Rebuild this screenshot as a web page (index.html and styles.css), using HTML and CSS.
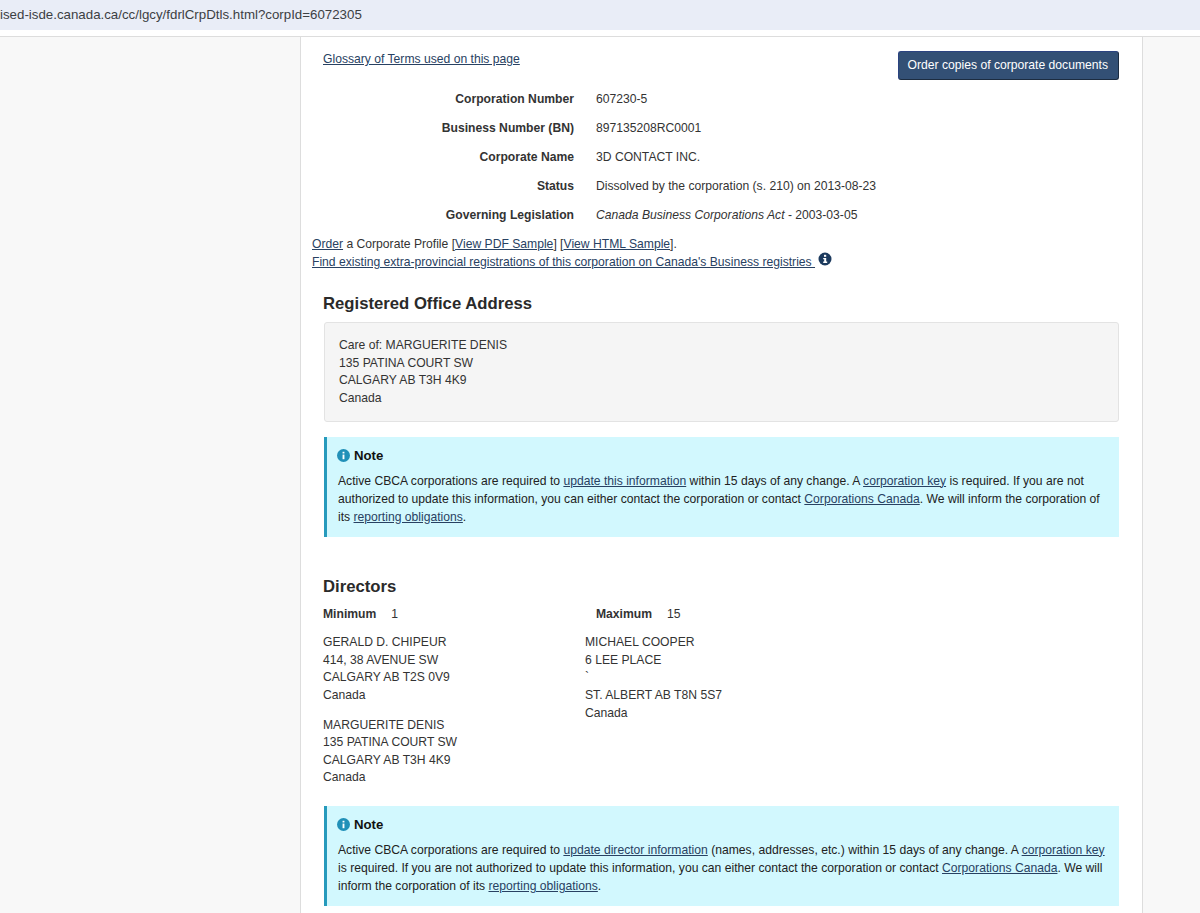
FILE: index.html
```html
<!DOCTYPE html>
<html lang="en">
  <head>
    <meta charset="UTF-8" />
    <title>Federal Corporation Information</title>
    <link rel="stylesheet" href="styles.css">
  </head>
  <body>
    <div class="top-strip">
      <div class="url-bar">ised-isde.canada.ca/cc/lgcy/fdrlCrpDtls.html?corpId=6072305</div>
    </div>

    <div class="page">
      <main class="content">
        <div class="top-row">
          <a href="#">Glossary of Terms used on this page</a>
          <a href="#" class="btn-order">Order copies of corporate documents</a>
        </div>

        <dl class="details">
          <div class="row"><dt>Corporation Number</dt><dd>607230-5</dd></div>
          <div class="row"><dt>Business Number (BN)</dt><dd>897135208RC0001</dd></div>
          <div class="row"><dt>Corporate Name</dt><dd>3D CONTACT INC.</dd></div>
          <div class="row"><dt>Status</dt><dd>Dissolved by the corporation (s. 210) on 2013-08-23</dd></div>
          <div class="row"><dt>Governing Legislation</dt><dd><em>Canada Business Corporations Act</em> - 2003-03-05</dd></div>
        </dl>

        <div class="links">
          <p><a href="#">Order</a> a Corporate Profile [<a href="#">View PDF Sample</a>] [<a href="#">View HTML Sample</a>].</p>
          <p>
            <a href="#">Find existing extra-provincial registrations of this corporation on Canada's Business registries </a>
            <svg class="info-dark" width="14" height="14" viewBox="0 0 14 14"><circle cx="7" cy="7" r="6.5" fill="#1c3a5e"/><rect x="6" y="2.8" width="2.2" height="2" fill="#fff"/><path d="M5.2 6h3v3.6h1v1.3H5.2V9.6h1V7.3H5.2z" fill="#fff"/></svg>
          </p>
        </div>

        <h2 class="office-title">Registered Office Address</h2>
        <div class="well">
          Care of: MARGUERITE DENIS<br>
          135 PATINA COURT SW<br>
          CALGARY AB T3H 4K9<br>
          Canada
        </div>

        <section class="note">
          <h3><svg width="13" height="13" viewBox="0 0 14 14"><circle cx="7" cy="7" r="7" fill="#2190b8"/><rect x="6" y="3" width="2" height="1.8" fill="#fff"/><rect x="6" y="6" width="2" height="5" fill="#fff"/></svg> Note</h3>
          <p>Active CBCA corporations are required to <a href="#">update this information</a> within 15 days of any change. A <a href="#">corporation key</a> is required. If you are not authorized to update this information, you can either contact the corporation or contact <a href="#">Corporations Canada</a>. We will inform the corporation of its <a href="#">reporting obligations</a>.</p>
        </section>

        <h2 class="directors-title">Directors</h2>
        <div class="limits">
          <div class="limit-min"><b>Minimum</b><span>1</span></div>
          <div class="limit-max"><b>Maximum</b><span>15</span></div>
        </div>
        <div class="directors">
          <div class="director-col">
            <p>GERALD D. CHIPEUR<br>414, 38 AVENUE SW<br>CALGARY AB T2S 0V9<br>Canada</p>
            <p>MARGUERITE DENIS<br>135 PATINA COURT SW<br>CALGARY AB T3H 4K9<br>Canada</p>
          </div>
          <div class="director-col">
            <p>MICHAEL COOPER<br>6 LEE PLACE<br>`<br>ST. ALBERT AB T8N 5S7<br>Canada</p>
          </div>
        </div>

        <section class="note">
          <h3><svg width="13" height="13" viewBox="0 0 14 14"><circle cx="7" cy="7" r="7" fill="#2190b8"/><rect x="6" y="3" width="2" height="1.8" fill="#fff"/><rect x="6" y="6" width="2" height="5" fill="#fff"/></svg> Note</h3>
          <p>Active CBCA corporations are required to <a href="#">update director information</a> (names, addresses, etc.) within 15 days of any change. A <a href="#">corporation key</a> is required. If you are not authorized to update this information, you can either contact the corporation or contact <a href="#">Corporations Canada</a>. We will inform the corporation of its <a href="#">reporting obligations</a>.</p>
        </section>
      </main>
    </div>
  </body>
</html>
```

FILE: styles.css
```css
html, body {
  height: 100%;
}

body {
  margin: 0;
  font-family: "Liberation Sans", Arial, sans-serif;
  font-size: 12.15px;
  line-height: 17.6px;
  color: #333;
  background-color: #f8f8f8;
  overflow: hidden;
}

a {
  color: #284162;
  text-decoration: underline;
}

p {
  margin: 0;
}

.top-strip {
  padding-bottom: 6px;
  background-color: #fff;
  border-bottom: 1px solid #ddd;
}

.url-bar {
  height: 30px;
  background-color: #e9edf7;
  font-size: 13.3px;
  line-height: 30px;
  color: #3c4043;
  white-space: nowrap;
}

.page {
  margin-left: 300px;
  width: 843px;
  min-height: 876px;
  box-sizing: border-box;
  background-color: #fff;
  border-left: 1px solid #ddd;
  border-right: 1px solid #ddd;
}

.content {
  padding: 13px 23px 0 11px;
}

.top-row {
  display: flex;
  justify-content: space-between;
  align-items: flex-start;
  margin-left: 11px;
  height: 33px;
}

.top-row > a:first-child {
  margin-top: 1px;
}

.btn-order {
  padding: 5px 10px 6px 9px;
  font-size: 12.15px;
  line-height: 16px;
  color: #fff;
  text-decoration: none;
  background-color: #335075;
  border: 1px solid #2b4380;
  border-right-color: #1c2c40;
  border-bottom-color: #1c2c40;
  border-radius: 3px;
  margin-top: 1px;
}

.details {
  margin: 8px 0 0;
}

.row {
  display: flex;
  height: 29px;
  align-items: flex-start;
}

.row dt {
  width: 262px;
  text-align: right;
  font-weight: bold;
}

.row dd {
  margin: 0 0 0 22px;
}

.info-dark {
  vertical-align: 0;
  margin-top: -4px;
  margin-left: 3px;
}

h2 {
  margin: 0;
  font-size: 16.7px;
  line-height: 20px;
  color: #2a2a2a;
}

.office-title {
  margin: 23px 0 0 11px;
}

.well {
  margin: 8px 0 0 12px;
  padding: 14px 14px 13px;
  background-color: #f5f5f5;
  border: 1px solid #e3e3e3;
  border-radius: 3px;
}

.note {
  margin: 15px 0 0 12px;
  padding: 10px 14px 11px 11px;
  background-color: #d2f8fe;
  border-left: 3px solid #269abc;
  color: #222;
}

.note h3 {
  margin: 0 0 7px;
  font-size: 13.2px;
  line-height: 18px;
  color: #111;
  display: flex;
  align-items: center;
  gap: 4px;
}

.note h3 svg {
  margin-left: -1px;
}

.note p {
  line-height: 18px;
}

.directors-title {
  margin: 40px 0 0 11px;
}

.limits {
  display: flex;
  margin: 9px 0 0 11px;
}

.limit-min {
  width: 273px;
}

.limit-min b, .limit-max b {
  margin-right: 15px;
}

.directors {
  display: flex;
  margin: 11px 0 0 11px;
}

.director-col {
  width: 262px;
}

.director-col p {
  margin-bottom: 12px;
}

.directors + .note {
  margin-top: 7px;
}
```
